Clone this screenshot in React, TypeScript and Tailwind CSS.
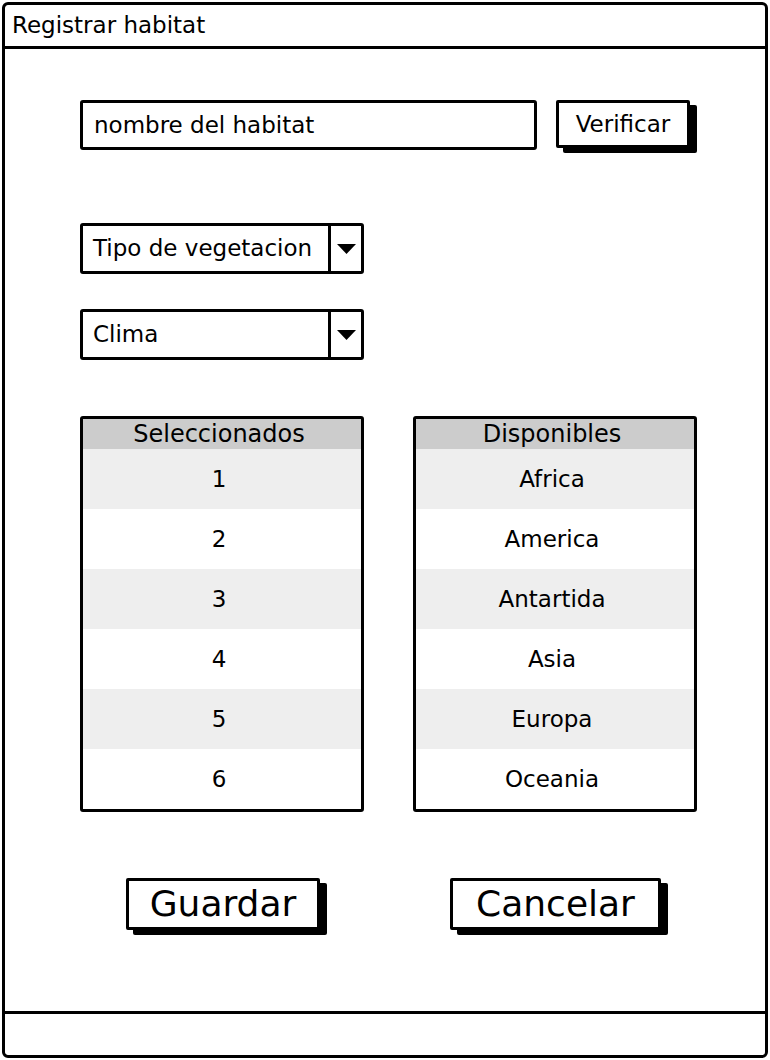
import { ReactNode } from "react";

const font = { fontFamily: '"DejaVu Sans", "Liberation Sans", sans-serif' };

const seleccionados = ["1", "2", "3", "4", "5", "6"];
const disponibles = ["Africa", "America", "Antartida", "Asia", "Europa", "Oceania"];

function Select({ label }: { label: string }) {
  return (
    <div className="flex h-[51px] w-[284px] items-stretch rounded-[3px] border-[3px] border-black bg-white">
      <div className="flex flex-1 items-center pl-[10px] text-[23px] text-black">{label}</div>
      <div className="flex w-[33px] items-center justify-center border-l-[3px] border-black">
        <svg width="19" height="10" viewBox="0 0 19 10">
          <polygon points="0,0 19,0 9.5,10" fill="#000" />
        </svg>
      </div>
    </div>
  );
}

function ListTable({ title, items }: { title: string; items: string[] }) {
  return (
    <div className="h-[396px] w-[284px] overflow-hidden rounded-[3px] border-[3px] border-black bg-white">
      <div className="flex h-[30px] items-center justify-center bg-[#cccccc] pr-[6px] text-[24px] text-black">
        {title}
      </div>
      {items.map((item, i) => (
        <div
          key={item}
          className={`flex h-[60px] items-center justify-center pr-[6px] text-[23px] text-black ${
            i % 2 === 0 ? "bg-[#eeeeee]" : "bg-white"
          }`}
        >
          {item}
        </div>
      ))}
    </div>
  );
}

function ShadowButton({ children, className }: { children: ReactNode; className: string }) {
  return (
    <div
      className={`flex items-center justify-center rounded-[2px] border-[3px] border-black bg-white text-black shadow-[7px_5px_0_#000] ${className}`}
    >
      {children}
    </div>
  );
}

export default function App() {
  return (
    <div className="h-[1060px] w-[770px] bg-white p-[2px]" style={font}>
      <div className="flex h-full flex-col rounded-[6px] border-[3px] border-black">
        <div className="flex h-[44px] items-center border-b-[3px] border-black px-[7px] text-[23px] text-black">
          Registrar habitat
        </div>

        <div className="flex-1 pl-[75px]">
          <div className="mt-[51px] flex items-start gap-[19px]">
            <div className="flex h-[50px] w-[457px] items-center rounded-[3px] border-[3px] border-black pl-[11px] text-[23px] text-black">
              nombre del habitat
            </div>
            <ShadowButton className="h-[48px] w-[134px] text-[23px]">Verificar</ShadowButton>
          </div>

          <div className="mt-[73px]">
            <Select label="Tipo de vegetacion" />
          </div>
          <div className="mt-[35px]">
            <Select label="Clima" />
          </div>

          <div className="mt-[56px] flex gap-[49px]">
            <ListTable title="Seleccionados" items={seleccionados} />
            <ListTable title="Disponibles" items={disponibles} />
          </div>

          <div className="mt-[66px] flex">
            <ShadowButton className="ml-[46px] h-[52px] w-[194px] text-[36px]">Guardar</ShadowButton>
            <ShadowButton className="ml-[130px] h-[52px] w-[211px] text-[36px]">Cancelar</ShadowButton>
          </div>
        </div>

        <div className="h-[44px] border-t-[3px] border-black" />
      </div>
    </div>
  );
}
